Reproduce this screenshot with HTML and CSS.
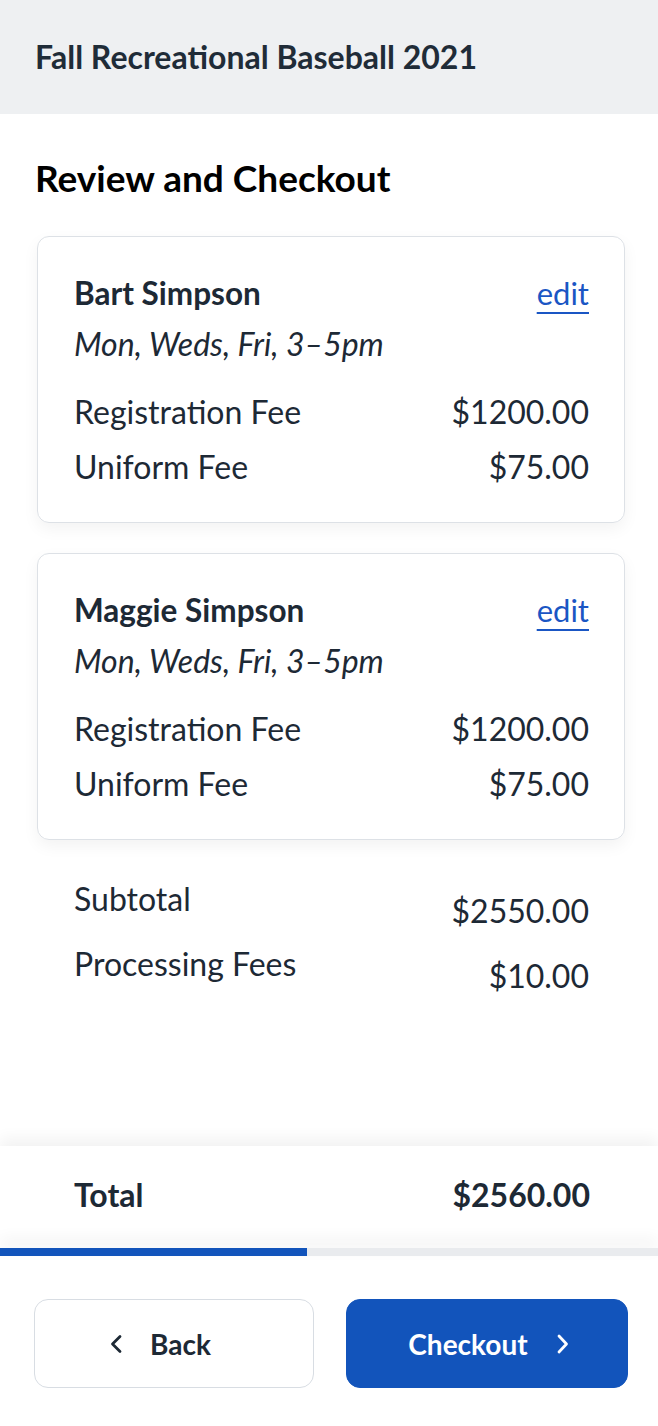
FILE: index.html
```html
<html>
	<head>
		<link rel="stylesheet" href="styles.css">
	</head>
	<body>

		<div class="pagina">

			<div class="encabezado">
				<h1 class="tituloEvento">Fall Recreational Baseball 2021</h1>
			</div>

			<div class="contenido">
				<h2 class="tituloSeccion">Review and Checkout</h2>

				<div class="tarjeta">
					<div class="filaNombre">
						<span class="nombre">Bart Simpson</span>
						<a class="editar" href="#">edit</a>
					</div>
					<div class="horario">Mon, Weds, Fri, 3–5pm</div>
					<div class="filaCargo">
						<span>Registration Fee</span>
						<span>$1200.00</span>
					</div>
					<div class="filaCargo">
						<span>Uniform Fee</span>
						<span>$75.00</span>
					</div>
				</div>

				<div class="tarjeta">
					<div class="filaNombre">
						<span class="nombre">Maggie Simpson</span>
						<a class="editar" href="#">edit</a>
					</div>
					<div class="horario">Mon, Weds, Fri, 3–5pm</div>
					<div class="filaCargo">
						<span>Registration Fee</span>
						<span>$1200.00</span>
					</div>
					<div class="filaCargo">
						<span>Uniform Fee</span>
						<span>$75.00</span>
					</div>
				</div>

				<div class="resumen">
					<div class="filaResumen">
						<span>Subtotal</span>
						<span class="valorResumen">$2550.00</span>
					</div>
					<div class="filaResumen">
						<span>Processing Fees</span>
						<span class="valorResumen">$10.00</span>
					</div>
				</div>
			</div>

			<div class="pie">
				<div class="filaTotal">
					<span>Total</span>
					<span>$2560.00</span>
				</div>
				<div class="progreso">
					<div class="progresoLleno"></div>
				</div>
				<div class="botones">
					<button class="boton botonAtras">
						<svg width="14" height="20" viewBox="0 0 14 20"><path d="M11 2.5 L3.5 10 L11 17.5" fill="none" stroke="currentColor" stroke-width="2.8" stroke-linecap="round" stroke-linejoin="round"/></svg>
						<span>Back</span>
					</button>
					<button class="boton botonPagar">
						<span>Checkout</span>
						<svg width="14" height="20" viewBox="0 0 14 20"><path d="M3 2 L10.5 10 L3 18" fill="none" stroke="currentColor" stroke-width="2.8" stroke-linecap="round" stroke-linejoin="round"/></svg>
					</button>
				</div>
			</div>

		</div>

	</body>
</html>
```

FILE: styles.css
```css
body {
	margin: 0;
	font-family: Lato, "Open Sans", sans-serif;
	color: #1d2935;
	background: #ffffff;
}

.pagina {
	display: flex;
	flex-direction: column;
	min-height: 100vh;
}

.encabezado {
	background: #eef0f2;
	height: 114px;
	display: flex;
	align-items: center;
	padding-left: 35px;
}

.tituloEvento {
	margin: 0 0 2px 0;
	font-size: 32px;
	font-weight: 700;
	color: #1f2c38;
}

.contenido {
	flex: 1;
	padding: 0 33px 0 37px;
}

.tituloSeccion {
	margin: 42px 0 36px -2px;
	font-size: 37px;
	line-height: 44px;
	font-weight: 700;
	color: #000000;
}

.tarjeta {
	border: 1px solid #dde1e6;
	border-radius: 12px;
	box-shadow: 0 6px 16px rgba(0, 0, 0, 0.05);
	padding: 38px 35px 35px 36px;
	margin-bottom: 30px;
}

.filaNombre {
	display: flex;
	justify-content: space-between;
	align-items: center;
	height: 36px;
}

.nombre {
	font-size: 31.5px;
	font-weight: 700;
}

.editar {
	font-size: 31px;
	color: #1a56c4;
	text-decoration: underline;
	text-underline-offset: 7px;
	text-decoration-thickness: 2px;
}

.horario {
	font-style: italic;
	font-size: 32px;
	line-height: 36px;
	margin-top: 15px;
}

.filaCargo {
	display: flex;
	justify-content: space-between;
	font-size: 32px;
	line-height: 40px;
	margin-top: 15px;
}

.horario + .filaCargo {
	margin-top: 30px;
}

.resumen {
	padding: 0 36px 0 37px;
	margin-top: 39px;
}

.filaResumen {
	display: flex;
	justify-content: space-between;
	font-size: 32px;
	line-height: 40px;
	height: 65px;
}

.valorResumen {
	padding-top: 12px;
}

.pie {
	display: flex;
	flex-direction: column;
}

.filaTotal {
	display: flex;
	justify-content: space-between;
	align-items: center;
	height: 96px;
	padding: 0 68px 6px 74px;
	font-size: 32px;
	font-weight: 700;
	box-shadow: 0 -8px 14px rgba(0, 0, 0, 0.05);
	position: relative;
}

.progreso {
	height: 8px;
	background: #e9ebee;
	box-shadow: 0 -8px 16px rgba(0, 0, 0, 0.07);
	position: relative;
}

.progresoLleno {
	width: 307px;
	height: 100%;
	background: #1254bb;
}

.botones {
	display: flex;
	gap: 32px;
	padding: 43px 30px 38px 34px;
}

.boton {
	box-sizing: border-box;
	height: 89px;
	border-radius: 14px;
	display: flex;
	align-items: center;
	justify-content: center;
	gap: 27px;
	font-family: Lato, "Open Sans", sans-serif;
	font-size: 28px;
	font-weight: 700;
	cursor: pointer;
}

.botonAtras {
	width: 280px;
	background: #ffffff;
	border: 1px solid #d8dde3;
	color: #1d2935;
	padding-right: 34px;
}

.botonPagar {
	width: 282px;
	background: #1254bb;
	border: 1px solid #1254bb;
	color: #ffffff;
	gap: 28px;
	padding-left: 10px;
}
```
